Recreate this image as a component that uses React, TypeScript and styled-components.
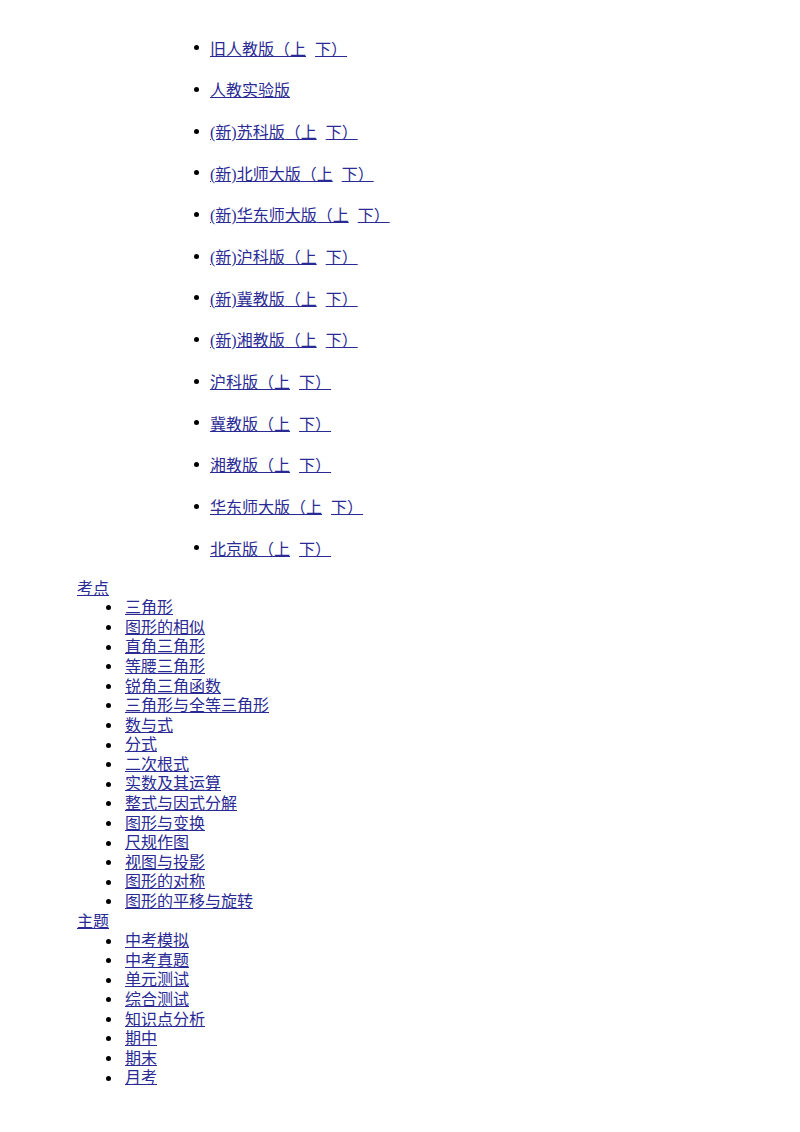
import React from 'react';
import styled, { createGlobalStyle } from 'styled-components';

type Edition = { name: string; split: boolean };

const editions: Edition[] = [
  { name: '旧人教版', split: true },
  { name: '人教实验版', split: false },
  { name: '(新)苏科版', split: true },
  { name: '(新)北师大版', split: true },
  { name: '(新)华东师大版', split: true },
  { name: '(新)沪科版', split: true },
  { name: '(新)冀教版', split: true },
  { name: '(新)湘教版', split: true },
  { name: '沪科版', split: true },
  { name: '冀教版', split: true },
  { name: '湘教版', split: true },
  { name: '华东师大版', split: true },
  { name: '北京版', split: true },
];

const groups: { title: string; items: string[] }[] = [
  {
    title: '考点',
    items: [
      '三角形',
      '图形的相似',
      '直角三角形',
      '等腰三角形',
      '锐角三角函数',
      '三角形与全等三角形',
      '数与式',
      '分式',
      '二次根式',
      '实数及其运算',
      '整式与因式分解',
      '图形与变换',
      '尺规作图',
      '视图与投影',
      '图形的对称',
      '图形的平移与旋转',
    ],
  },
  {
    title: '主题',
    items: ['中考模拟', '中考真题', '单元测试', '综合测试', '知识点分析', '期中', '期末', '月考'],
  },
];

export default function App() {
  return (
    <>
      <GlobalStyle />
      <Page>
        <EditionList>
          {editions.map(edition => (
            <EditionItem key={edition.name}>
              <Bullet $width={21} $offset={4.5} />
              {edition.split ? (
                <>
                  <Link href='#'>{edition.name}（上</Link>
                  <Link href='#' $gap={9}>
                    下）
                  </Link>
                </>
              ) : (
                <Link href='#'>{edition.name}</Link>
              )}
            </EditionItem>
          ))}
        </EditionList>
        {groups.map(group => (
          <Group key={group.title}>
            <GroupTitle href='#'>{group.title}</GroupTitle>
            <TopicList>
              {group.items.map(item => (
                <TopicItem key={item}>
                  <Bullet $width={48} $offset={28.5} />
                  <Link href='#'>{item}</Link>
                </TopicItem>
              ))}
            </TopicList>
          </Group>
        ))}
      </Page>
    </>
  );
}

const GlobalStyle = createGlobalStyle`
  body {
    margin: 0;
    background: #fff;
    color: #000;
    font-family: "Liberation Serif", "Noto Sans CJK SC", serif;
    font-size: 16px;
  }
`;

const Page = styled.div`
  padding: 27px 0 40px 77px;
`;

const EditionList = styled.ul`
  list-style: none;
  margin: 0 0 0 112px;
  padding: 0;
`;

const EditionItem = styled.li`
  display: flex;
  align-items: center;
  height: 41.67px;
`;

const Bullet = styled.span<{ $width: number; $offset: number }>`
  flex: none;
  display: flex;
  align-items: center;
  width: ${p => p.$width}px;
  align-self: stretch;

  &::before {
    content: '';
    width: 5px;
    height: 5px;
    margin-left: ${p => p.$offset}px;
    border-radius: 50%;
    background: #000;
  }
`;

const Link = styled.a<{ $gap?: number }>`
  margin-left: ${p => p.$gap ?? 0}px;
  color: #2a2a95;
  text-decoration: underline;
  white-space: nowrap;
`;

const Group = styled.div`
  margin-top: 10px;
  line-height: 19.6px;

  & + & {
    margin-top: 0;
  }
`;

const GroupTitle = styled.a`
  display: block;
  width: max-content;
  color: #2a2a95;
  text-decoration: underline;
`;

const TopicList = styled.ul`
  list-style: none;
  margin: 0;
  padding: 0;
`;

const TopicItem = styled.li`
  display: flex;
  height: 19.6px;
`;
